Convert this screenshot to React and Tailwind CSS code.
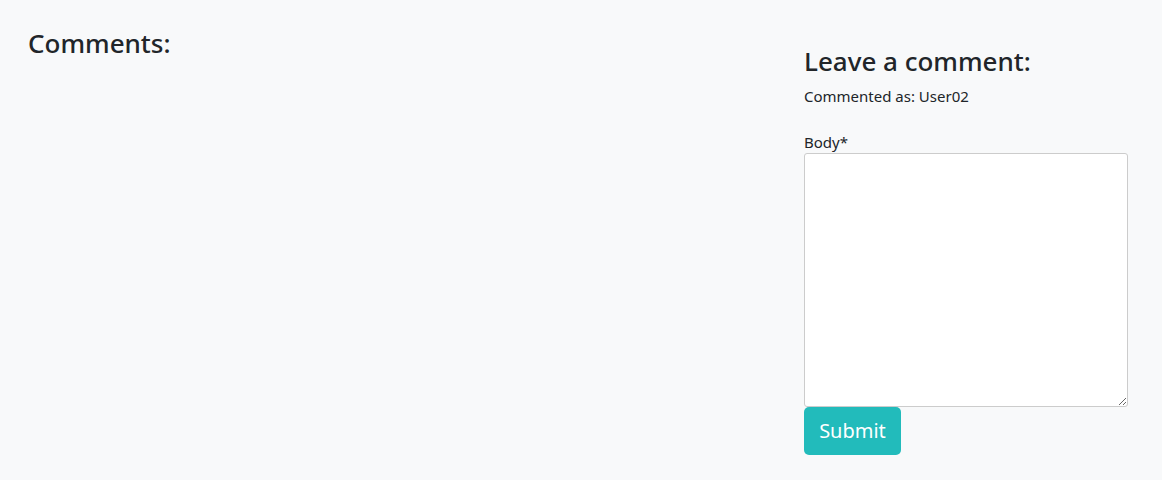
export default function App() {
  return (
    <div className="min-h-[480px] w-full bg-[#f8f9fa] text-[#212529]" style={{ fontFamily: '"Noto Sans", "Open Sans", sans-serif' }}>
      <div className="flex pl-[28px] pr-[34px]">
        <div className="flex-1 pt-[28px]">
          <h3 className="text-[26px] font-medium leading-[1.2]">Comments:</h3>
        </div>
        <div className="w-[324px] pt-[46px]">
          <h3 className="text-[26px] font-medium leading-[1.2]">Leave a comment:</h3>
          <p className="mt-[8px] text-[15px] leading-[22px]">Commented as: User02</p>
          <form className="mt-[24px]">
            <label className="block text-[15px] leading-[22px]">Body*</label>
            <textarea className="block h-[254px] w-full resize-y rounded-[3px] border border-[#cccccc] bg-white" />
            <button type="button" className="block h-[48px] w-[97px] rounded-[5px] bg-[#22bbbb] text-[20px] text-white">Submit</button>
          </form>
        </div>
      </div>
    </div>
  );
}
